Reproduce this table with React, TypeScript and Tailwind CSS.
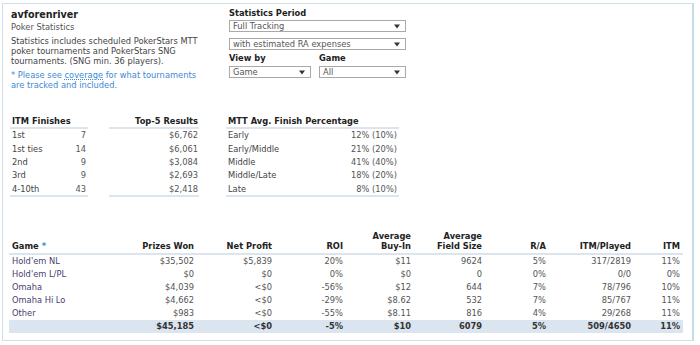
import React from "react";

const itm = [
  ["1st", "7"],
  ["1st ties", "14"],
  ["2nd", "9"],
  ["3rd", "9"],
  ["4-10th", "43"],
];
const top5 = ["$6,762", "$6,061", "$3,084", "$2,693", "$2,418"];
const mtt = [
  ["Early", "12% (10%)"],
  ["Early/Middle", "21% (20%)"],
  ["Middle", "41% (40%)"],
  ["Middle/Late", "18% (20%)"],
  ["Late", "8% (10%)"],
];
const games = [
  ["Hold'em NL", "$35,502", "$5,839", "20%", "$11", "9624", "5%", "317/2819", "11%"],
  ["Hold'em L/PL", "$0", "$0", "0%", "$0", "0", "0%", "0/0", "0%"],
  ["Omaha", "$4,039", "<$0", "-56%", "$12", "644", "7%", "78/796", "10%"],
  ["Omaha Hi Lo", "$4,662", "<$0", "-29%", "$8.62", "532", "7%", "85/767", "11%"],
  ["Other", "$983", "<$0", "-55%", "$8.11", "816", "4%", "29/268", "11%"],
];
const total = ["", "$45,185", "<$0", "-5%", "$10", "6079", "5%", "509/4650", "11%"];

const cols = "grid grid-cols-[101px_87px_78px_71px_68px_71px_64px_85px_49px]";

function Arrow() {
  return (
    <svg width="6" height="5" viewBox="0 0 6 5" className="shrink-0">
      <path d="M0 0.5h6L3 4.5z" fill="#333" />
    </svg>
  );
}

function Select({ value, className }: { value: string; className: string }) {
  return (
    <div
      className={`flex h-[12px] items-center justify-between border border-[#a9a9a9] bg-white pl-[3px] pr-[5px] text-[#555] leading-[10px] ${className}`}
    >
      <span>{value}</span>
      <Arrow />
    </div>
  );
}

export default function App() {
  return (
    <div className="h-[345px] w-[700px] bg-white pl-[2px] pt-[3px] font-['DejaVu_Sans',sans-serif] text-[8.3px] text-[#444]">
      <div className="h-[338px] w-[692px] border border-[#cfdfe8] border-r-2 border-r-[#c4dbe8] px-[6px]">
        {/* header area */}
        <div className="flex">
          <div className="w-[220px] pl-[2px] pt-[5px]">
            <div className="h-[12px] text-[9.6px] font-bold leading-[12px] text-[#222]">avforenriver</div>
            <div className="mt-[1px] leading-[10px] text-[#555]">Poker Statistics</div>
            <div className="mt-[4px] w-[196px] leading-[10px]">
              Statistics includes scheduled PokerStars MTT poker tournaments and PokerStars SNG tournaments.
              (SNG min. 36 players).
            </div>
            <div className="mt-[4px] w-[196px] leading-[10px] text-[#3b8ad6]">
              * Please see{" "}
              <span className="inline-block h-[10px] leading-[10px] underline decoration-dotted underline-offset-1">
                coverage
              </span>{" "}
              for what tournaments are tracked and included.
            </div>
          </div>
          <div className="pt-[4px]">
            <div className="h-[10px] font-bold leading-[10px] text-[#222]">Statistics Period</div>
            <Select value="Full Tracking" className="mt-[2px] w-[177px]" />
            <Select value="with estimated RA expenses" className="mt-[6px] w-[177px]" />
            <div className="mt-[3px] flex gap-[8px]">
              <div className="w-[82px]">
                <div className="h-[10px] font-bold leading-[10px] text-[#222]">View by</div>
                <Select value="Game" className="mt-[3px] w-[82px]" />
              </div>
              <div className="w-[87px]">
                <div className="h-[10px] font-bold leading-[10px] text-[#222]">Game</div>
                <Select value="All" className="mt-[3px] w-[87px]" />
              </div>
            </div>
          </div>
        </div>

        {/* summary tables */}
        <div className="mt-[26px] flex items-start">
          <div className="ml-[1px] w-[78px]">
            <div className="flex h-[13px] items-center border-b-2 border-[#dce5ed] px-[2px] font-bold text-[#222]">
              ITM Finishes
            </div>
            {itm.map(([a, b]) => (
              <div key={a} className="flex h-[13.3px] items-center justify-between px-[2px]">
                <span>{a}</span>
                <span className="text-[#555]">{b}</span>
              </div>
            ))}
            <div className="h-[2px] bg-[#dce5ed]" />
          </div>
          <div className="ml-[21px] w-[90px]">
            <div className="flex h-[13px] items-center justify-end border-b-2 border-[#dce5ed] px-[1px] font-bold text-[#222]">
              Top-5 Results
            </div>
            {top5.map((v) => (
              <div key={v} className="flex h-[13.3px] items-center justify-end px-[1px] text-[#555]">
                {v}
              </div>
            ))}
            <div className="h-[2px] bg-[#dce5ed]" />
          </div>
          <div className="ml-[27px] w-[173px]">
            <div className="flex h-[13px] items-center border-b-2 border-[#dce5ed] px-[2px] font-bold text-[#222]">
              MTT Avg. Finish Percentage
            </div>
            {mtt.map(([a, b]) => (
              <div key={a} className="flex h-[13.3px] items-center justify-between px-[2px]">
                <span>{a}</span>
                <span className="text-[#555]">{b}</span>
              </div>
            ))}
            <div className="h-[2px] bg-[#dce5ed]" />
          </div>
        </div>

        {/* games table */}
        <div className="mt-[35px] w-[674px]">
          <div className={`${cols} border-b-2 border-[#dce5ed] font-bold leading-[9.6px] text-[#222]`}>
            <div className="flex items-end px-[3px] pb-[1px]">
              Game<span className="ml-[3px] text-[#3b8ad6]">*</span>
            </div>
            <div className="flex items-end justify-end px-[3px] pb-[1px]">Prizes Won</div>
            <div className="flex items-end justify-end px-[3px] pb-[1px]">Net Profit</div>
            <div className="flex items-end justify-end px-[3px] pb-[1px]">ROI</div>
            <div className="px-[3px] pb-[1px] text-right">
              Average
              <br />
              Buy-In
            </div>
            <div className="px-[3px] pb-[1px] text-right">
              Average
              <br />
              Field Size
            </div>
            <div className="flex items-end justify-end px-[3px] pb-[1px]">R/A</div>
            <div className="flex items-end justify-end px-[3px] pb-[1px]">ITM/Played</div>
            <div className="flex items-end justify-end px-[3px] pb-[1px]">ITM</div>
          </div>
          {games.map((r) => (
            <div key={r[0]} className={`${cols} h-[13px] items-center`}>
              {r.map((c, i) => (
                <div
                  key={i}
                  className={i === 0 ? "px-[3px] text-[#46406e]" : "px-[3px] text-right text-[#555]"}
                >
                  {c}
                </div>
              ))}
            </div>
          ))}
          <div className={`${cols} h-[13px] items-center bg-[#dae5f0] font-bold text-[#333]`}>
            {total.map((c, i) => (
              <div key={i} className="px-[3px] text-right">
                {c}
              </div>
            ))}
          </div>
        </div>
      </div>
    </div>
  );
}
